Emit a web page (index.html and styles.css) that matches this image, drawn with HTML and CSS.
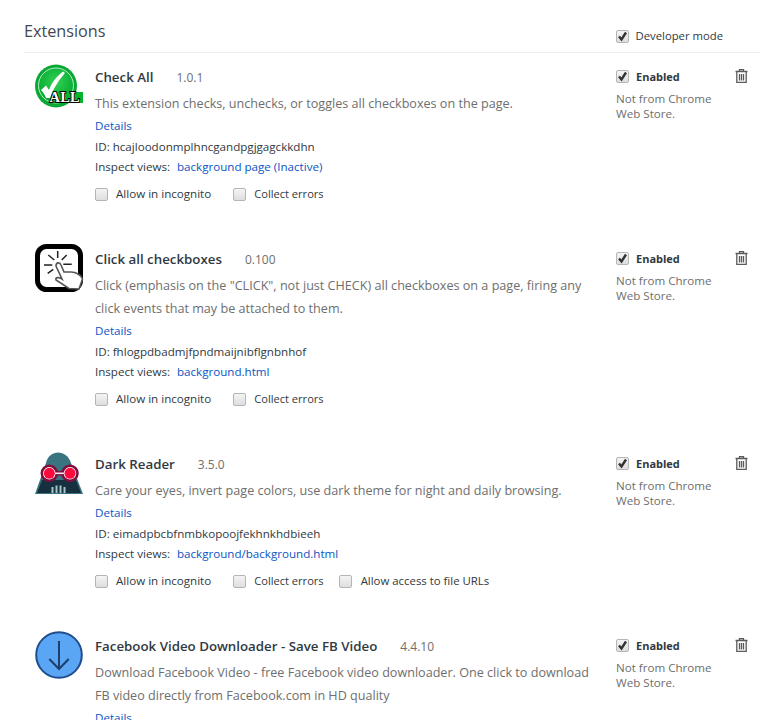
FILE: index.html
```html
<!DOCTYPE html>
<html lang="en">
<head>
<meta charset="utf-8">
<title>Extensions</title>
<link rel="stylesheet" href="styles.css">
</head>
<body>
<div class="page">
  <header class="header">
    <h1 class="title">Extensions</h1>
    <label class="devmode"><span class="cb checked"><svg viewBox="0 0 11 11"><path d="M2 5.500l2.500 3L9 1.500" /></svg></span>Developer mode</label>
  </header>

  <section class="ext">
    <div class="icon">
      <svg viewBox="0 0 48 48" width="48" height="48">
        <defs><radialGradient id="g1" cx="50%" cy="40%" r="60%"><stop offset="0" stop-color="#35d058"/><stop offset="1" stop-color="#00a82c"/></radialGradient></defs>
        <ellipse cx="21" cy="23" rx="21" ry="21.500" fill="#0aa834"/>
        <circle cx="21" cy="22.500" r="17.500" fill="url(#g1)" stroke="#b6eec4" stroke-width="1"/>
        <rect x="15" y="29" width="33" height="11" fill="#05b52e"/>
        <path d="M6 27l5-4.500 3 4.500C17 19 22 13 28 8.500l2 1.500C24 17 18 26 15 35h-4C10 32 8 29 6 27z" fill="#fff"/>
        <text x="14.500" y="38.500" class="alltxt">ALL</text>
      </svg>
    </div>
    <div class="main">
      <div class="name-row"><span class="name">Check All</span><span class="ver">1.0.1</span></div>
      <p class="desc">This extension checks, unchecks, or toggles all checkboxes on the page.</p>
      <a class="link details">Details</a>
      <div class="meta">ID: hcajloodonmplhncgandpgjgagckkdhn</div>
      <div class="meta views"><span class="views-label">Inspect views:</span><a class="link">background page (Inactive)</a></div>
      <div class="opts">
        <label class="opt"><span class="cb"></span>Allow in incognito</label>
        <label class="opt opt-errors"><span class="cb"></span>Collect errors</label>
      </div>
    </div>
    <div class="side">
      <div class="enabled-row"><label class="enabled"><span class="cb checked"><svg viewBox="0 0 11 11"><path d="M2 5.500l2.500 3L9 1.500" /></svg></span>Enabled</label>
        <svg class="trash" viewBox="0 0 13 14"><path d="M4.500 2V.7h4V2M.5 2.500h12M1.800 3v10.300h9.400V3M4.500 5v6.500M6.500 5v6.500M8.500 5v6.500"/></svg></div>
      <p class="store">Not from Chrome<br>Web Store.</p>
    </div>
  </section>

  <section class="ext">
    <div class="icon">
      <svg viewBox="0 0 48 48" width="48" height="48">
        <rect x="2.500" y="1.500" width="43" height="43" rx="9" fill="#fff" stroke="#000" stroke-width="5"/>
        <path d="M22.700 6v7M13.300 10l6 5M31.700 10l-5 5M9 20h8.300M28.300 19.300h8.400M12.700 28.300l5.600-4" stroke="#222" stroke-width="1.500" fill="none"/>
        <path d="M21 21c0-4 4-4 5-1l3 7h7c5 0 10 3 11.500 7L44 44l-10-.5L21 35c-1-3 3-3 6-1z" fill="#fff" stroke="#555" stroke-width="1.600"/>
      </svg>
    </div>
    <div class="main">
      <div class="name-row"><span class="name">Click all checkboxes</span><span class="ver">0.100</span></div>
      <p class="desc">Click (emphasis on the "CLICK", not just CHECK) all checkboxes on a page, firing any click events that may be attached to them.</p>
      <a class="link details">Details</a>
      <div class="meta">ID: fhlogpdbadmjfpndmaijnibflgnbnhof</div>
      <div class="meta views"><span class="views-label">Inspect views:</span><a class="link">background.html</a></div>
      <div class="opts">
        <label class="opt"><span class="cb"></span>Allow in incognito</label>
        <label class="opt opt-errors"><span class="cb"></span>Collect errors</label>
      </div>
    </div>
    <div class="side">
      <div class="enabled-row"><label class="enabled"><span class="cb checked"><svg viewBox="0 0 11 11"><path d="M2 5.500l2.500 3L9 1.500" /></svg></span>Enabled</label>
        <svg class="trash" viewBox="0 0 13 14"><path d="M4.500 2V.7h4V2M.5 2.500h12M1.800 3v10.300h9.400V3M4.500 5v6.500M6.500 5v6.500M8.500 5v6.500"/></svg></div>
      <p class="store">Not from Chrome<br>Web Store.</p>
    </div>
  </section>

  <section class="ext">
    <div class="icon">
      <svg viewBox="0 0 48 48" width="48" height="48">
        <path d="M0 44L11 13C14 -1 32 -1 36 13L48 44z" fill="#3a7480"/>
        <path d="M7 30h34l5 13H2z" fill="#17303f"/>
        <path d="M17.500 37v6M21.500 35.500v7.500M25.500 35.500v7.500M29.500 37v6" stroke="#a5c6c9" stroke-width="2"/>
        <path d="M19 23.300h10" stroke="#7d0f3e" stroke-width="4.500"/>
        <circle cx="14.300" cy="23.300" r="7.500" fill="#fff" stroke="#7d0f3e" stroke-width="2.500"/>
        <circle cx="35" cy="23.300" r="7.500" fill="#fff" stroke="#7d0f3e" stroke-width="2.500"/>
        <path d="M20 23.300h9" stroke="#f4e9ee" stroke-width="1.600"/>
        <circle cx="14.300" cy="23.300" r="5.500" fill="#ff0a3c"/>
        <circle cx="35" cy="23.300" r="5.500" fill="#ff0a3c"/>
      </svg>
    </div>
    <div class="main">
      <div class="name-row"><span class="name">Dark Reader</span><span class="ver">3.5.0</span></div>
      <p class="desc">Care your eyes, invert page colors, use dark theme for night and daily browsing.</p>
      <a class="link details">Details</a>
      <div class="meta">ID: eimadpbcbfnmbkopoojfekhnkhdbieeh</div>
      <div class="meta views"><span class="views-label">Inspect views:</span><a class="link">background/background.html</a></div>
      <div class="opts">
        <label class="opt"><span class="cb"></span>Allow in incognito</label>
        <label class="opt opt-errors"><span class="cb"></span>Collect errors</label>
        <label class="opt opt-files"><span class="cb"></span>Allow access to file URLs</label>
      </div>
    </div>
    <div class="side">
      <div class="enabled-row"><label class="enabled"><span class="cb checked"><svg viewBox="0 0 11 11"><path d="M2 5.500l2.500 3L9 1.500" /></svg></span>Enabled</label>
        <svg class="trash" viewBox="0 0 13 14"><path d="M4.500 2V.7h4V2M.5 2.500h12M1.800 3v10.300h9.400V3M4.500 5v6.500M6.500 5v6.500M8.500 5v6.500"/></svg></div>
      <p class="store">Not from Chrome<br>Web Store.</p>
    </div>
  </section>

  <section class="ext">
    <div class="icon">
      <svg viewBox="0 0 48 48" width="48" height="48">
        <circle cx="24" cy="23" r="22.800" fill="#5ba5f5" stroke="#1f4e8c" stroke-width="2"/>
        <path d="M24 9v28M14.300 27l9.700 10 9.700-10" fill="none" stroke="#1c3f6e" stroke-width="2"/>
      </svg>
    </div>
    <div class="main">
      <div class="name-row"><span class="name">Facebook Video Downloader - Save FB Video</span><span class="ver">4.4.10</span></div>
      <p class="desc">Download Facebook Video - free Facebook video downloader. One click to download FB video directly from Facebook.com in HD quality</p>
      <a class="link details">Details</a>
    </div>
    <div class="side">
      <div class="enabled-row"><label class="enabled"><span class="cb checked"><svg viewBox="0 0 11 11"><path d="M2 5.500l2.500 3L9 1.500" /></svg></span>Enabled</label>
        <svg class="trash" viewBox="0 0 13 14"><path d="M4.500 2V.7h4V2M.5 2.500h12M1.800 3v10.300h9.400V3M4.500 5v6.500M6.500 5v6.500M8.500 5v6.500"/></svg></div>
      <p class="store">Not from Chrome<br>Web Store.</p>
    </div>
  </section>
</div>
</body>
</html>
```
FILE: styles.css
```css
html, body { margin: 0; padding: 0; height: 720px; overflow: hidden; background: #fff; }
body { font-family: "Open Sans", "Noto Sans", sans-serif; font-size: 11.6px; color: #303942; }
.page { padding: 0 20px 0 24px; }
.header { display: flex; justify-content: space-between; align-items: flex-start; height: 52px; border-bottom: 1px solid #eeeeee; }
.title { margin: 19px 0 0; font-size: 16.200px; font-weight: 400; line-height: 24px; color: #404850; }
.devmode { display: flex; align-items: center; gap: 7px; margin: 28px 37px 0 0; font-size: 11.300px; line-height: 16px; }
.ext { display: flex; padding-top: 12px; padding-bottom: 33px; }
.icon { width: 48px; height: 48px; margin: -2px 12px 0 11px; flex: none; }
.icon svg { display: block; overflow: visible; }
.alltxt { font: 700 14.500px "Liberation Serif", serif; letter-spacing: .2px; fill: #fff; stroke: #000; stroke-width: 1.800px; paint-order: stroke; }
.main { width: 505px; flex: none; }
.name-row { display: flex; gap: 23px; height: 24px; align-items: center; }
.name { font-size: 13.300px; font-weight: 600; color: #303942; }
.ver { font-size: 12px; color: #6e6e6e; }
.desc { margin: 3px 0 0; font-size: 12.600px; line-height: 23px; color: #6e6e6e; }
.link { color: #0b55c4; }
.details { display: block; line-height: 23px; margin-top: -1px; }
.meta { line-height: 20.500px; }
.views { margin-top: -1px; }
.views-label { margin-right: 7px; }
.opts { display: flex; gap: 22px; margin-top: 9px; }
.opt { display: flex; align-items: center; gap: 8px; line-height: 16px; }
.opt-errors { font-size: 11.100px; }
.opt-files { margin-left: -7px; gap: 9px; font-size: 11.400px; }
.cb { display: inline-block; width: 13px; height: 13px; border: 1px solid #b5b5b5; border-radius: 2px; background: linear-gradient(#f4f4f4, #dedede); box-sizing: border-box; flex: none; }
.cb svg { display: block; width: 11px; height: 11px; fill: none; stroke: #333; stroke-width: 2.400px; }
.side { width: 144px; margin-left: 16px; flex: none; }
.enabled-row { display: flex; justify-content: space-between; align-items: center; height: 22px; padding-right: 12px; }
.enabled { display: flex; align-items: center; gap: 7px; font-weight: 700; font-size: 11px; color: #303942; }
.trash { width: 13px; height: 14px; fill: none; stroke: #5a5a5a; stroke-width: 1.300px; }
.store { margin: 4px 0 0; line-height: 15px; color: #6e6e6e; }
```
